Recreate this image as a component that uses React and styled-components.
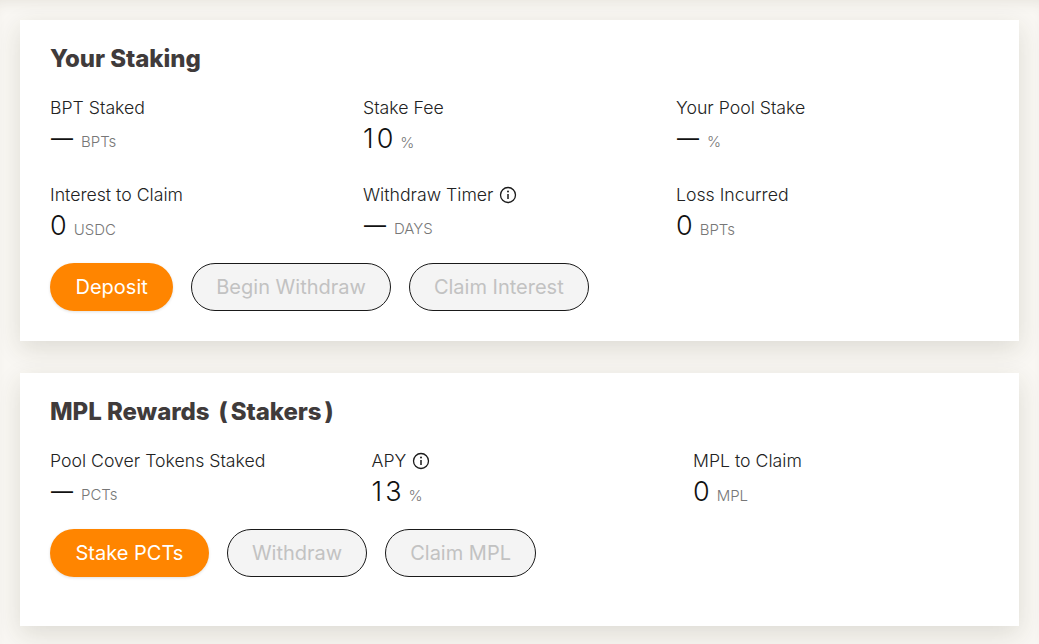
import styled, { createGlobalStyle } from "styled-components";

const GlobalStyle = createGlobalStyle`
  html, body {
    margin: 0;
    padding: 0;
    background: #f9f7f3;
    font-family: Inter, "Liberation Sans", sans-serif;
  }
`;

const Page = styled.div`
  display: flex;
  flex-direction: column;
  gap: 32px;
  padding: 20px 20px 18px;
  width: 1039px;
  height: 644px;
  box-sizing: border-box;
  overflow: hidden;
  box-shadow: inset 0 10px 14px -8px rgba(70, 60, 30, 0.1);
`;

const Card = styled.section`
  background: #fff;
  height: ${(p) => p.$height}px;
  box-sizing: border-box;
  padding: 24px 30px 0;
  box-shadow: 0 8px 24px rgba(60, 55, 30, 0.14);
`;

const Title = styled.h2`
  margin: 0;
  font-size: 24px;
  line-height: 30px;
  font-weight: 800;
  letter-spacing: -0.05px;
  color: #403b3b;
`;

const Paren = styled.span`
  margin: ${(p) => (p.$close ? "0 0 0 3px" : "0 3px 0 9px")};
`;

const Stats = styled.div`
  display: grid;
  grid-template-columns: ${(p) => p.$columns};
  row-gap: 28px;
  margin-top: 22px;
`;

const Label = styled.div`
  display: flex;
  align-items: center;
  gap: 6px;
  font-size: 17.7px;
  line-height: 24px;
  font-weight: 300;
  color: #222;
`;

const Value = styled.div`
  display: flex;
  align-items: baseline;
  gap: 4px;
  height: 35px;
  font-size: 27px;
  line-height: 37px;
  font-weight: 300;
  letter-spacing: 3px;
  color: #111;
`;

const Dash = styled.span`
  font-size: 22px;
  line-height: 39px;
  font-weight: 400;
  letter-spacing: 0;
  margin: 0 4px 0 1px;
  transform: translateY(-1px);
`;

const Unit = styled.span`
  font-size: 15px;
  font-weight: 300;
  letter-spacing: 0;
  color: #777;
`;

const Actions = styled.div`
  display: flex;
  gap: 18px;
  margin-top: 21px;
`;

const Button = styled.button`
  height: 48px;
  padding: 0 ${(p) => (p.disabled ? 24 : 25.5)}px;
  box-sizing: border-box;
  border-radius: 24px;
  font-family: inherit;
  font-size: 20px;
  border: ${(p) => (p.disabled ? "1px solid #1a1a1a" : "none")};
  background: ${(p) => (p.disabled ? "#f4f4f4" : "#ff8500")};
  color: ${(p) => (p.disabled ? "#c2c2c2" : "#fff")};
  box-shadow: ${(p) => (p.disabled ? "none" : "0 1px 3px rgba(0, 0, 0, 0.12)")};
`;

function InfoIcon() {
  return (
    <svg width="18" height="18" viewBox="0 0 18 18" fill="none" stroke="#1a1a1a">
      <circle cx="9" cy="9" r="7.5" strokeWidth="1.3" />
      <path d="M9 8v5" strokeWidth="1.5" />
      <circle cx="9" cy="5.5" r="1" fill="#1a1a1a" stroke="none" />
    </svg>
  );
}

function Stat({ label, value, unit, info }) {
  return (
    <div>
      <Label>
        {label}
        {info && <InfoIcon />}
      </Label>
      <Value>
        {value === "—" ? <Dash>—</Dash> : value}
        <Unit>{unit}</Unit>
      </Value>
    </div>
  );
}

export default function App() {
  return (
    <>
      <GlobalStyle />
      <Page>
        <Card $height={321}>
          <Title>Your Staking</Title>
          <Stats $columns="313px 313px 1fr">
            <Stat label="BPT Staked" value="—" unit="BPTs" />
            <Stat label="Stake Fee" value="10" unit="%" />
            <Stat label="Your Pool Stake" value="—" unit="%" />
            <Stat label="Interest to Claim" value="0" unit="USDC" />
            <Stat label="Withdraw Timer" value="—" unit="DAYS" info />
            <Stat label="Loss Incurred" value="0" unit="BPTs" />
          </Stats>
          <Actions>
            <Button>Deposit</Button>
            <Button disabled>Begin Withdraw</Button>
            <Button disabled>Claim Interest</Button>
          </Actions>
        </Card>
        <Card $height={253}>
          <Title>
            MPL Rewards<Paren>(</Paren>Stakers<Paren $close>)</Paren>
          </Title>
          <Stats $columns="321.5px 321.5px 1fr">
            <Stat label="Pool Cover Tokens Staked" value="—" unit="PCTs" />
            <Stat label="APY" value="13" unit="%" info />
            <Stat label="MPL to Claim" value="0" unit="MPL" />
          </Stats>
          <Actions>
            <Button>Stake PCTs</Button>
            <Button disabled>Withdraw</Button>
            <Button disabled>Claim MPL</Button>
          </Actions>
        </Card>
      </Page>
    </>
  );
}
